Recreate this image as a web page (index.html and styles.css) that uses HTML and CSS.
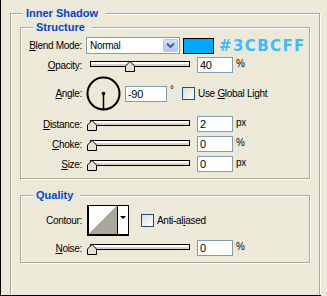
FILE: index.html
```html
<!DOCTYPE html>
<html lang="en">
<head>
  <meta charset="UTF-8" />
  <title>Inner Shadow</title>
  <link rel="stylesheet" href="styles.css">
</head>
<body>

  <div class="panel">
    <div class="group outer">
      <span class="legend">Inner Shadow</span>

      <div class="group structure">
        <span class="legend">Structure</span>

        <div class="row blend-row">
          <span class="lbl"><u>B</u>lend Mode:</span>
          <div class="select">
            <span>Normal</span>
            <span class="drop">
              <svg width="13" height="11" viewBox="0 0 13 11"><polyline points="3,3.5 6.5,7 10,3.5" fill="none" stroke="#4d6185" stroke-width="2"/></svg>
            </span>
          </div>
          <div class="swatch"></div>
          <span class="hex">#3CBCFF</span>
        </div>

        <div class="row opacity-row">
          <span class="lbl"><u>O</u>pacity:</span>
          <div class="slider">
            <div class="track"></div>
            <svg class="thumb" style="left:35px" width="10" height="11" viewBox="0 0 10 11"><polygon points="0.5,5 5,0.5 9.5,5 9.5,10.5 0.5,10.5" fill="#e6e2d2" stroke="#000"/></svg>
          </div>
          <div class="field">40</div>
          <span class="unit">%</span>
        </div>

        <div class="row angle-row">
          <span class="lbl"><u>A</u>ngle:</span>
          <svg class="dial" width="35" height="35" viewBox="0 0 35 35">
            <circle cx="17.5" cy="17.5" r="16" fill="none" stroke="#000" stroke-width="2"/>
            <circle cx="17.5" cy="17.5" r="1.8" fill="#000"/>
            <line x1="17.5" y1="17.5" x2="17.5" y2="33" stroke="#000" stroke-width="1.5"/>
          </svg>
          <div class="field wide">-90</div>
          <span class="deg">°</span>
          <span class="check"></span>
          <span class="check-text">Use <u>G</u>lobal Light</span>
        </div>

        <div class="row dist-row">
          <span class="lbl"><u>D</u>istance:</span>
          <div class="slider">
            <div class="track"></div>
            <svg class="thumb" style="left:-3px" width="10" height="11" viewBox="0 0 10 11"><polygon points="0.5,5 5,0.5 9.5,5 9.5,10.5 0.5,10.5" fill="#e6e2d2" stroke="#000"/></svg>
          </div>
          <div class="field">2</div>
          <span class="unit">px</span>
        </div>

        <div class="row next-row">
          <span class="lbl"><u>C</u>hoke:</span>
          <div class="slider">
            <div class="track"></div>
            <svg class="thumb" style="left:-3px" width="10" height="11" viewBox="0 0 10 11"><polygon points="0.5,5 5,0.5 9.5,5 9.5,10.5 0.5,10.5" fill="#e6e2d2" stroke="#000"/></svg>
          </div>
          <div class="field">0</div>
          <span class="unit">%</span>
        </div>

        <div class="row next-row">
          <span class="lbl"><u>S</u>ize:</span>
          <div class="slider">
            <div class="track"></div>
            <svg class="thumb" style="left:-3px" width="10" height="11" viewBox="0 0 10 11"><polygon points="0.5,5 5,0.5 9.5,5 9.5,10.5 0.5,10.5" fill="#e6e2d2" stroke="#000"/></svg>
          </div>
          <div class="field">0</div>
          <span class="unit">px</span>
        </div>
      </div>

      <div class="group quality">
        <span class="legend">Quality</span>

        <div class="row contour-row">
          <span class="lbl">Contour:</span>
          <div class="contour">
            <div class="curve"></div>
            <div class="curve-drop"><span class="tri"></span></div>
          </div>
          <span class="check"></span>
          <span class="check-text">Anti-al<u>i</u>ased</span>
        </div>

        <div class="row noise-row">
          <span class="lbl"><u>N</u>oise:</span>
          <div class="slider">
            <div class="track"></div>
            <svg class="thumb" style="left:-3px" width="10" height="11" viewBox="0 0 10 11"><polygon points="0.5,5 5,0.5 9.5,5 9.5,10.5 0.5,10.5" fill="#e6e2d2" stroke="#000"/></svg>
          </div>
          <div class="field">0</div>
          <span class="unit">%</span>
        </div>
      </div>
    </div>
  </div>

</body>
</html>
```

FILE: styles.css
```css
* {
  box-sizing: border-box;
}

body {
  margin: 0;
  background: #ece9d8;
  font-family: 'Liberation Sans', Arial, sans-serif;
  font-size: 10px;
  letter-spacing: -0.3px;
  color: #000;
}

u {
  text-decoration-thickness: 1px;
  text-underline-offset: 1px;
}

.panel {
  width: 321px;
  height: 296px;
  border-left: 1px solid #000;
  border-bottom: 1px solid #000;
  overflow: hidden;
}

.group {
  position: relative;
  border: 1px solid #aca899;
  box-shadow: inset 1px 1px 0 #fff, 1px 1px 0 #fff;
}

.legend {
  position: absolute;
  top: -7px;
  left: 12px;
  padding: 0 7px 0 3px;
  line-height: 13px;
  background: #ece9d8;
  color: #0046d5;
  font-size: 11px;
  font-weight: bold;
  letter-spacing: 0;
}

.outer {
  width: 310px;
  height: 300px;
  margin: 13px 0 0 9px;
  padding-top: 13px;
}

.structure,
.quality {
  width: 290px;
  margin-left: 9px;
  padding: 9px 0 6px 0;
}

.quality {
  margin-top: 16px;
}

.row {
  display: flex;
  align-items: center;
}

.lbl {
  width: 61px;
  text-align: right;
  flex-shrink: 0;
}

.blend-row {
  height: 17px;
}

.opacity-row {
  height: 16px;
  margin-top: 3px;
}

.angle-row {
  height: 35px;
  margin-top: 3px;
}

.dist-row {
  height: 16px;
  margin-top: 5px;
}

.next-row {
  height: 16px;
  margin-top: 4px;
}

.contour-row {
  height: 31px;
}

.noise-row {
  height: 16px;
  margin-top: 4px;
}

.select {
  display: flex;
  align-items: center;
  justify-content: space-between;
  width: 94px;
  height: 17px;
  margin-left: 4px;
  padding-left: 3px;
  border: 1px solid #7f9db9;
  background: #fff;
}

.drop {
  display: flex;
  align-items: center;
  justify-content: center;
  width: 15px;
  height: 13px;
  margin-right: 1px;
  border: 1px solid #b5c8f2;
  border-radius: 1px;
  background: linear-gradient(#d2defd, #b4c8f6);
}

.swatch {
  width: 31px;
  height: 16px;
  margin-left: 3px;
  border: 1px solid #000;
  background: #00a8ff;
}

.hex {
  margin-left: 5px;
  font-family: 'DejaVu Sans', sans-serif;
  font-size: 15px;
  font-weight: bold;
  letter-spacing: 1.4px;
  color: #3cbcff;
}

.slider {
  position: relative;
  width: 100px;
  height: 16px;
  margin-left: 8px;
}

.track {
  position: absolute;
  top: 4px;
  left: 0;
  width: 100px;
  height: 6px;
  border: 1px solid #000;
  background: linear-gradient(#fff 50%, #d6d2c2 50%);
}

.thumb {
  position: absolute;
  top: 4px;
  display: block;
}

.field {
  width: 36px;
  height: 16px;
  margin-left: 7px;
  padding-left: 2px;
  border: 1px solid #7f9db9;
  background: #fff;
  font-size: 11px;
  line-height: 14px;
}

.unit {
  align-self: flex-start;
  margin-left: 3px;
  margin-top: 1px;
}

.dial {
  margin-left: 4px;
  display: block;
}

.field.wide {
  width: 42px;
  margin-left: 4px;
}

.deg {
  align-self: flex-start;
  width: 15px;
  margin-top: 8px;
  padding-left: 3px;
}

.check {
  width: 13px;
  height: 13px;
  border: 1px solid #1c5180;
  background: linear-gradient(135deg, #dcdbd5, #fff);
}

.check-text {
  margin-left: 3px;
}

.contour {
  display: flex;
  width: 42px;
  height: 31px;
  margin-left: 5px;
  border: 1px solid #000;
  border-left-width: 2px;
  border-bottom-width: 2px;
  background: #fff;
}

.curve {
  width: 29px;
  border-right: 1px solid #000;
  background: linear-gradient(to top left, #aca899 50%, #fff 50%);
}

.curve-drop {
  flex: 1;
  display: flex;
  justify-content: center;
  padding-top: 10px;
}

.tri {
  width: 0;
  height: 0;
  border-left: 3px solid transparent;
  border-right: 3px solid transparent;
  border-top: 3px solid #000;
}

.contour-row .check {
  margin-left: 12px;
}
```
